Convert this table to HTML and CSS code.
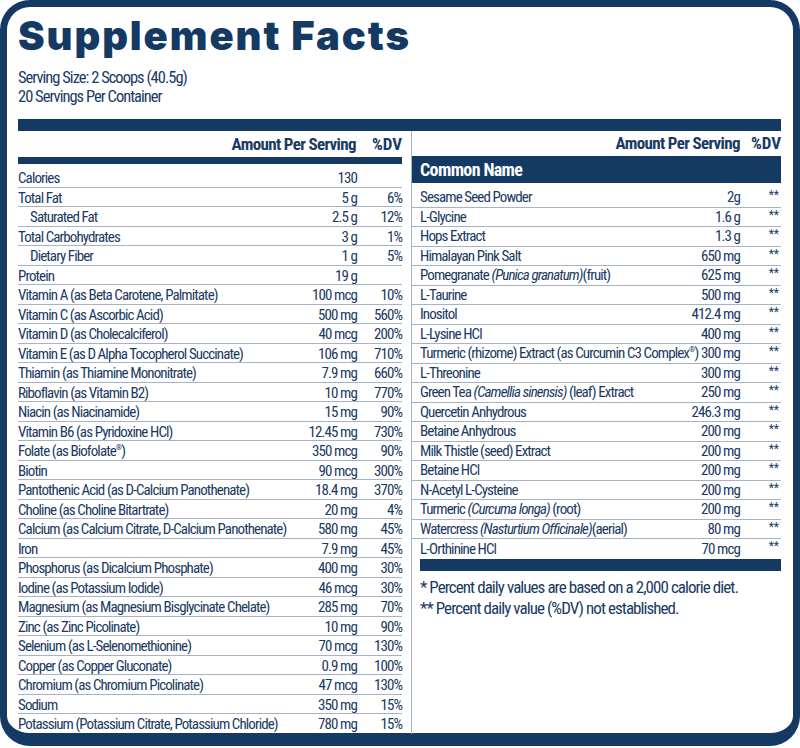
FILE: index.html
```html
<!DOCTYPE html>
<html>
<head>
<meta charset="utf-8">
<link rel="stylesheet" href="styles.css">
</head>
<body>
<div class="label">
  <h1 class="title">Supplement Facts</h1>
  <div class="serving">
    <div>Serving Size: 2 Scoops (40.5g)</div>
    <div>20 Servings Per Container</div>
  </div>
  <div class="topbar"></div>
  <div class="cols">
    <div class="col col-left">
      <div class="head"><span class="h-amt">Amount Per Serving</span><span class="h-dv">%DV</span></div>
      <div class="thick"></div>
      <div class="rows">
        <div class="row"><span class="name">Calories</span><span class="amt">130</span><span class="dv"></span></div>
        <div class="row"><span class="name">Total Fat</span><span class="amt">5 g</span><span class="dv">6%</span></div>
        <div class="row"><span class="name indent">Saturated Fat</span><span class="amt">2.5 g</span><span class="dv">12%</span></div>
        <div class="row"><span class="name">Total Carbohydrates</span><span class="amt">3 g</span><span class="dv">1%</span></div>
        <div class="row"><span class="name indent">Dietary Fiber</span><span class="amt">1 g</span><span class="dv">5%</span></div>
        <div class="row"><span class="name">Protein</span><span class="amt">19 g</span><span class="dv"></span></div>
        <div class="row"><span class="name">Vitamin A (as Beta Carotene, Palmitate)</span><span class="amt">100 mcg</span><span class="dv">10%</span></div>
        <div class="row"><span class="name">Vitamin C (as Ascorbic Acid)</span><span class="amt">500 mg</span><span class="dv">560%</span></div>
        <div class="row"><span class="name">Vitamin D (as Cholecalciferol)</span><span class="amt">40 mcg</span><span class="dv">200%</span></div>
        <div class="row"><span class="name">Vitamin E (as D Alpha Tocopherol Succinate)</span><span class="amt">106 mg</span><span class="dv">710%</span></div>
        <div class="row"><span class="name">Thiamin (as Thiamine Mononitrate)</span><span class="amt">7.9 mg</span><span class="dv">660%</span></div>
        <div class="row"><span class="name">Riboflavin (as Vitamin B2)</span><span class="amt">10 mg</span><span class="dv">770%</span></div>
        <div class="row"><span class="name">Niacin (as Niacinamide)</span><span class="amt">15 mg</span><span class="dv">90%</span></div>
        <div class="row"><span class="name">Vitamin B6 (as Pyridoxine HCl)</span><span class="amt">12.45 mg</span><span class="dv">730%</span></div>
        <div class="row"><span class="name">Folate (as Biofolate<sup>®</sup>)</span><span class="amt">350 mcg</span><span class="dv">90%</span></div>
        <div class="row"><span class="name">Biotin</span><span class="amt">90 mcg</span><span class="dv">300%</span></div>
        <div class="row"><span class="name">Pantothenic Acid (as D-Calcium Panothenate)</span><span class="amt">18.4 mg</span><span class="dv">370%</span></div>
        <div class="row"><span class="name">Choline (as Choline Bitartrate)</span><span class="amt">20 mg</span><span class="dv">4%</span></div>
        <div class="row"><span class="name">Calcium (as Calcium Citrate, D-Calcium Panothenate)</span><span class="amt">580 mg</span><span class="dv">45%</span></div>
        <div class="row"><span class="name">Iron</span><span class="amt">7.9 mg</span><span class="dv">45%</span></div>
        <div class="row"><span class="name">Phosphorus (as Dicalcium Phosphate)</span><span class="amt">400 mg</span><span class="dv">30%</span></div>
        <div class="row"><span class="name">Iodine (as Potassium Iodide)</span><span class="amt">46 mcg</span><span class="dv">30%</span></div>
        <div class="row"><span class="name">Magnesium (as Magnesium Bisglycinate Chelate)</span><span class="amt">285 mg</span><span class="dv">70%</span></div>
        <div class="row"><span class="name">Zinc (as Zinc Picolinate)</span><span class="amt">10 mg</span><span class="dv">90%</span></div>
        <div class="row"><span class="name">Selenium (as L-Selenomethionine)</span><span class="amt">70 mcg</span><span class="dv">130%</span></div>
        <div class="row"><span class="name">Copper (as Copper Gluconate)</span><span class="amt">0.9 mg</span><span class="dv">100%</span></div>
        <div class="row"><span class="name">Chromium (as Chromium Picolinate)</span><span class="amt">47 mcg</span><span class="dv">130%</span></div>
        <div class="row"><span class="name">Sodium</span><span class="amt">350 mg</span><span class="dv">15%</span></div>
        <div class="row"><span class="name">Potassium (Potassium Citrate, Potassium Chloride)</span><span class="amt">780 mg</span><span class="dv">15%</span></div>
      </div>
    </div>
    <div class="col col-right">
      <div class="head"><span class="h-amt">Amount Per Serving</span><span class="h-dv">%DV</span></div>
      <div class="common">Common Name</div>
      <div class="rows">
        <div class="row"><span class="name">Sesame Seed Powder</span><span class="amt">2g</span><span class="dv star">**</span></div>
        <div class="row"><span class="name">L-Glycine</span><span class="amt">1.6 g</span><span class="dv star">**</span></div>
        <div class="row"><span class="name">Hops Extract</span><span class="amt">1.3 g</span><span class="dv star">**</span></div>
        <div class="row"><span class="name">Himalayan Pink Salt</span><span class="amt">650 mg</span><span class="dv star">**</span></div>
        <div class="row"><span class="name">Pomegranate <i>(Punica granatum)</i>(fruit)</span><span class="amt">625 mg</span><span class="dv star">**</span></div>
        <div class="row"><span class="name">L-Taurine</span><span class="amt">500 mg</span><span class="dv star">**</span></div>
        <div class="row"><span class="name">Inositol</span><span class="amt">412.4 mg</span><span class="dv star">**</span></div>
        <div class="row"><span class="name">L-Lysine HCl</span><span class="amt">400 mg</span><span class="dv star">**</span></div>
        <div class="row"><span class="name">Turmeric (rhizome) Extract (as Curcumin C3 Complex<sup>®</sup>)</span><span class="amt">300 mg</span><span class="dv star">**</span></div>
        <div class="row"><span class="name">L-Threonine</span><span class="amt">300 mg</span><span class="dv star">**</span></div>
        <div class="row"><span class="name">Green Tea <i>(Camellia sinensis)</i> (leaf) Extract</span><span class="amt">250 mg</span><span class="dv star">**</span></div>
        <div class="row"><span class="name">Quercetin Anhydrous</span><span class="amt">246.3 mg</span><span class="dv star">**</span></div>
        <div class="row"><span class="name">Betaine Anhydrous</span><span class="amt">200 mg</span><span class="dv star">**</span></div>
        <div class="row"><span class="name">Milk Thistle (seed) Extract</span><span class="amt">200 mg</span><span class="dv star">**</span></div>
        <div class="row"><span class="name">Betaine HCl</span><span class="amt">200 mg</span><span class="dv star">**</span></div>
        <div class="row"><span class="name">N-Acetyl L-Cysteine</span><span class="amt">200 mg</span><span class="dv star">**</span></div>
        <div class="row"><span class="name">Turmeric <i>(Curcuma longa)</i> (root)</span><span class="amt">200 mg</span><span class="dv star">**</span></div>
        <div class="row"><span class="name">Watercress <i>(Nasturtium Officinale)</i>(aerial)</span><span class="amt">80 mg</span><span class="dv star">**</span></div>
        <div class="row"><span class="name">L-Orthinine HCl</span><span class="amt">70 mcg</span><span class="dv star">**</span></div>
      </div>
      <div class="endbar"></div>
      <div class="notes">
        <p>* Percent daily values are based on a 2,000 calorie diet.</p>
        <p>** Percent daily value (%DV) not established.</p>
      </div>
    </div>
  </div>
</div>
</body>
</html>
```

FILE: styles.css
```css
* {
  box-sizing: border-box;
  margin: 0;
  padding: 0;
}

html, body {
  margin: 0;
  background: #ffffff;
}

body {
  width: 800px;
  height: 748px;
  overflow: hidden;
  font-family: "Liberation Sans Narrow", "Roboto Condensed", "DejaVu Sans Condensed", "Liberation Sans", sans-serif;
  color: #1a3963;
  letter-spacing: -0.04em;
}

.label {
  width: 800px;
  height: 746px;
  border: 7px solid #143a63;
  border-bottom-width: 13px;
  border-radius: 30px;
  padding: 0 12px 0 11px;
}

.title {
  font-family: "Inter", "Liberation Sans", sans-serif;
  font-weight: 900;
  font-size: 40px;
  line-height: 44px;
  letter-spacing: 1.9px;
  color: #143a63;
  margin-top: 7px;
}

.serving {
  font-size: 16.5px;
  line-height: 19px;
  letter-spacing: -0.06em;
  margin-top: 10px;
}

.topbar {
  height: 12px;
  background: #143a63;
  margin-top: 13px;
}

.cols {
  display: flex;
}

.col-left {
  width: 384px;
  flex: 0 0 384px;
}

.col-right {
  flex: 1 1 auto;
  min-width: 0;
  margin-left: 9px;
  border-left: 1px solid #a7b3c4;
}

.head {
  height: 26px;
  display: flex;
  justify-content: flex-end;
  align-items: flex-end;
  font-weight: bold;
  font-size: 17px;
  line-height: 20px;
  padding-bottom: 3px;
}

.h-amt {
  margin-right: 16px;
}

.h-dv {
  letter-spacing: 0;
}

.col-right .head {
  height: 25px;
}

.col-right .h-amt {
  margin-right: 11px;
}

.thick {
  height: 7px;
  background: #143a63;
  margin-bottom: 4px;
}

.common {
  height: 27px;
  background: #143a63;
  color: #ffffff;
  font-weight: bold;
  font-size: 18px;
  line-height: 27px;
  padding-left: 8px;
  margin-bottom: 5px;
}

.rows {
  display: flex;
  flex-direction: column;
}

.row {
  height: 19.5px;
  display: grid;
  grid-template-columns: minmax(0, 1fr) auto 45px;
  align-items: center;
  font-size: 15px;
  line-height: 18px;
  letter-spacing: -0.06em;
  border-bottom: 1px solid #a7b3c4;
  white-space: nowrap;
}

.col-left .row {
  padding-top: 1px;
}

.row:last-child {
  border-bottom: none;
}

.col-right .row {
  grid-template-columns: minmax(0, 1fr) auto 39px;
  padding-left: 8px;
  padding-right: 2px;
}

.name.indent {
  padding-left: 12px;
}

.amt, .dv {
  text-align: right;
}

.star {
  font-size: 12px;
  align-self: start;
  line-height: 14px;
  letter-spacing: 0;
}

sup {
  font-size: 8px;
  vertical-align: 6px;
  line-height: 0;
}

.endbar {
  height: 12px;
  background: #143a63;
  margin-left: 8px;
}

.notes {
  padding-left: 8px;
  padding-top: 6px;
  font-size: 17px;
  line-height: 21px;
  letter-spacing: -0.055em;
}
```
